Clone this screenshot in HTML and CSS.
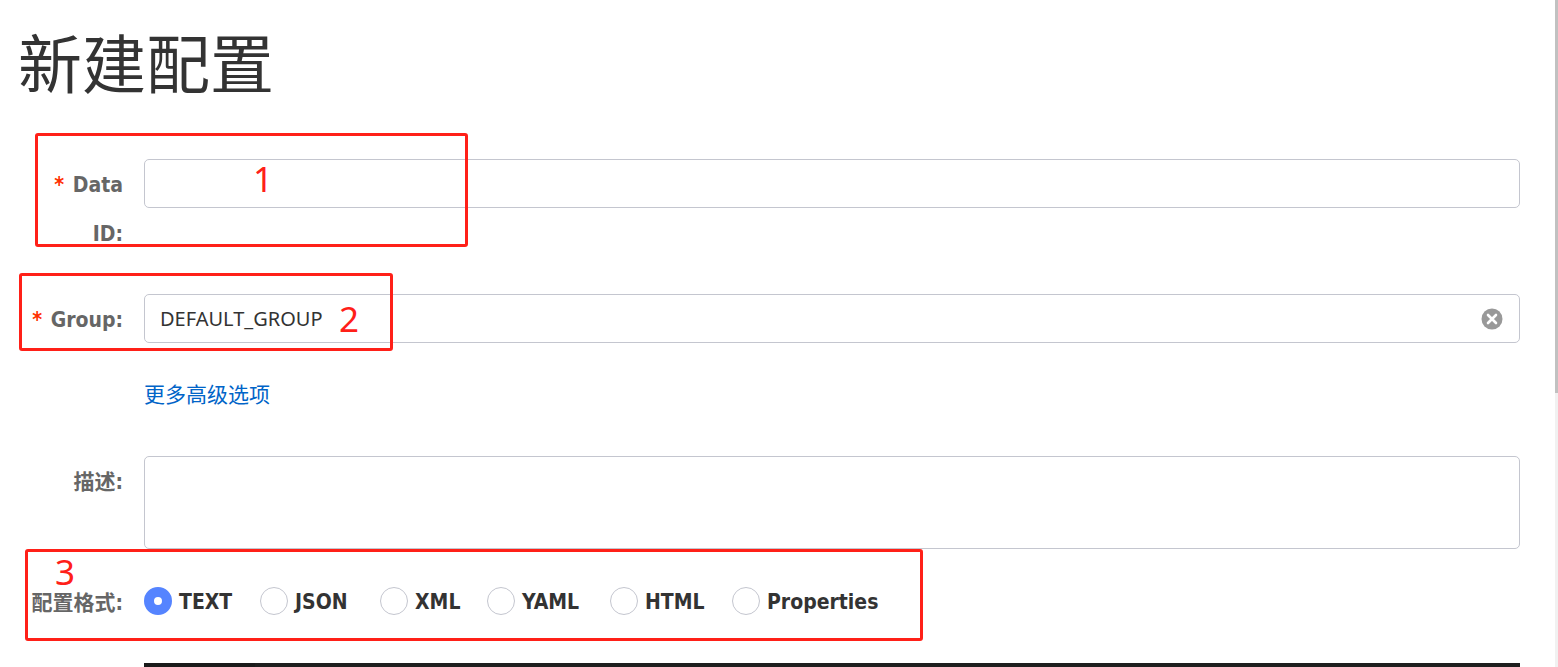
FILE: index.html
```html
<!DOCTYPE html>
<html lang="zh-CN">
<head>
<meta charset="utf-8">
<title>新建配置</title>
<link rel="stylesheet" href="styles.css">
</head>
<body>
<main class="page">
  <h1 class="title">新建配置</h1>
  <form class="form">
    <div class="row row-dataid">
      <label class="label label-latin"><span class="req">*</span> Data ID:</label>
      <div class="field"><div class="input"></div></div>
    </div>
    <div class="row">
      <label class="label label-latin"><span class="req">*</span> Group:</label>
      <div class="field">
        <div class="input">
          <span class="value">DEFAULT_GROUP</span>
          <svg class="clear" viewBox="0 0 22 22" width="22" height="22" aria-hidden="true">
            <circle cx="11" cy="11" r="10.5" fill="#999"/>
            <path d="M7 7l8 8M15 7l-8 8" stroke="#fff" stroke-width="2.6" stroke-linecap="round"/>
          </svg>
        </div>
      </div>
    </div>
    <div class="row row-link">
      <div class="label"></div>
      <div class="field"><a class="link">更多高级选项</a></div>
    </div>
    <div class="row row-desc">
      <label class="label">描述:</label>
      <div class="field"><div class="input textarea"></div></div>
    </div>
    <div class="row row-format">
      <label class="label label-format">配置格式:</label>
      <div class="field radios">
        <span class="radio"><i class="dot checked"></i><span class="radio-text">TEXT</span></span>
        <span class="radio"><i class="dot"></i><span class="radio-text">JSON</span></span>
        <span class="radio"><i class="dot"></i><span class="radio-text">XML</span></span>
        <span class="radio"><i class="dot"></i><span class="radio-text">YAML</span></span>
        <span class="radio"><i class="dot"></i><span class="radio-text">HTML</span></span>
        <span class="radio"><i class="dot"></i><span class="radio-text">Properties</span></span>
      </div>
    </div>
    <div class="row row-editor">
      <div class="label label-empty"></div>
      <div class="field"><div class="editor"><div class="gutter"></div></div></div>
    </div>
  </form>
</main>
<div class="box box-1"></div><span class="num num-1">1</span>
<div class="box box-2"></div><span class="num num-2">2</span>
<div class="box box-3"></div><span class="num num-3">3</span>
<div class="scroll-track"><div class="scroll-thumb"></div></div>
</body>
</html>
```
FILE: styles.css
```css
html, body {
  margin: 0;
  height: 667px;
  overflow: hidden;
  background: #fff;
}
body {
  position: relative;
  font-family: "Noto Sans", "Noto Sans CJK SC", sans-serif;
  color: #333;
}
.title {
  margin: 0;
  padding: 17px 0 0 18px;
  height: 137px;
  box-sizing: border-box;
  font-family: "Noto Sans CJK SC", sans-serif;
  font-size: 64px;
  line-height: 86px;
  font-weight: 400;
  color: #333;
}
.form {
  padding-top: 22px;
  width: 1520px;
}
.row {
  display: flex;
  margin-bottom: 37px;
}
.label {
  width: 144px;
  flex: none;
  box-sizing: border-box;
  padding: 0 21px 0 30px;
  text-align: right;
  font-family: "DejaVu Sans Condensed", "DejaVu Sans", "Noto Sans CJK SC", sans-serif;
  font-stretch: condensed;
  font-size: 21px;
  line-height: 49px;
  font-weight: 700;
  color: #666;
}
.label-latin {
  padding-top: 2px;
  margin-bottom: -2px;
}
.req {
  color: #ff3000;
  margin-right: 2px;
}
.field {
  flex: 1;
  min-width: 0;
}
.input {
  box-sizing: border-box;
  height: 49px;
  border: 1px solid #c4c6cf;
  border-radius: 5px;
  display: flex;
  align-items: center;
  justify-content: space-between;
  padding: 0 16px 0 15px;
  font-size: 20px;
}
.value {
  color: #333;
}
.clear {
  display: block;
}
.row-link {
  height: 39px;
}
.link {
  display: block;
  margin-top: -1px;
  font-family: "Noto Sans CJK SC", sans-serif;
  font-size: 21px;
  line-height: 29px;
  color: #0064c8;
}
.row-desc {
  margin-bottom: 27px;
}
.textarea {
  height: 93px;
}
.row-desc .label {
  line-height: 52px;
}
.row-format {
  margin-bottom: 38px;
}
.label-format {
  padding: 12px 21px 0 0;
  line-height: 30px;
  white-space: nowrap;
}
.radios {
  display: grid;
  grid-template-columns: 116px 120px 107px 123px 122px auto;
  align-items: center;
  height: 49px;
}
.radio {
  display: flex;
  align-items: center;
  font-family: "DejaVu Sans Condensed", "DejaVu Sans", sans-serif;
  font-stretch: condensed;
  font-size: 21px;
  font-weight: 700;
  color: #333;
}
.radio-text {
  padding-top: 2px;
}
.dot {
  box-sizing: border-box;
  width: 28px;
  height: 28px;
  margin-right: 7px;
  border: 1px solid #c4c6cf;
  border-radius: 50%;
  background: #fff;
}
.dot.checked {
  border: 10px solid #5584ff;
}
.row-editor {
  margin-bottom: 0;
}
.label-empty {
  height: 4px;
}
.editor {
  height: 4px;
  background: #1e1e1e;
}
.gutter {
  width: 111px;
  height: 100%;
  background: #1a1a1a;
}
.box {
  position: absolute;
  box-sizing: border-box;
  border: 3px solid #ff2018;
  border-radius: 3px;
}
.box-1 { left: 35px; top: 133px; width: 433px; height: 114px; }
.box-2 { left: 19px; top: 273px; width: 374px; height: 78px; }
.box-3 { left: 25px; top: 549px; width: 898px; height: 92px; }
.num {
  position: absolute;
  font-family: "Noto Sans", sans-serif;
  font-size: 35px;
  line-height: 28px;
  color: #ff2018;
}
.num-1 { left: 253px; top: 165px; }
.num-2 { left: 339px; top: 305px; }
.num-3 { left: 55px; top: 558px; }
.scroll-track {
  position: absolute;
  right: 0;
  top: 0;
  width: 3px;
  height: 667px;
  background: #f1f1f1;
}
.scroll-thumb {
  height: 393px;
  background: #c1c1c1;
}
```
